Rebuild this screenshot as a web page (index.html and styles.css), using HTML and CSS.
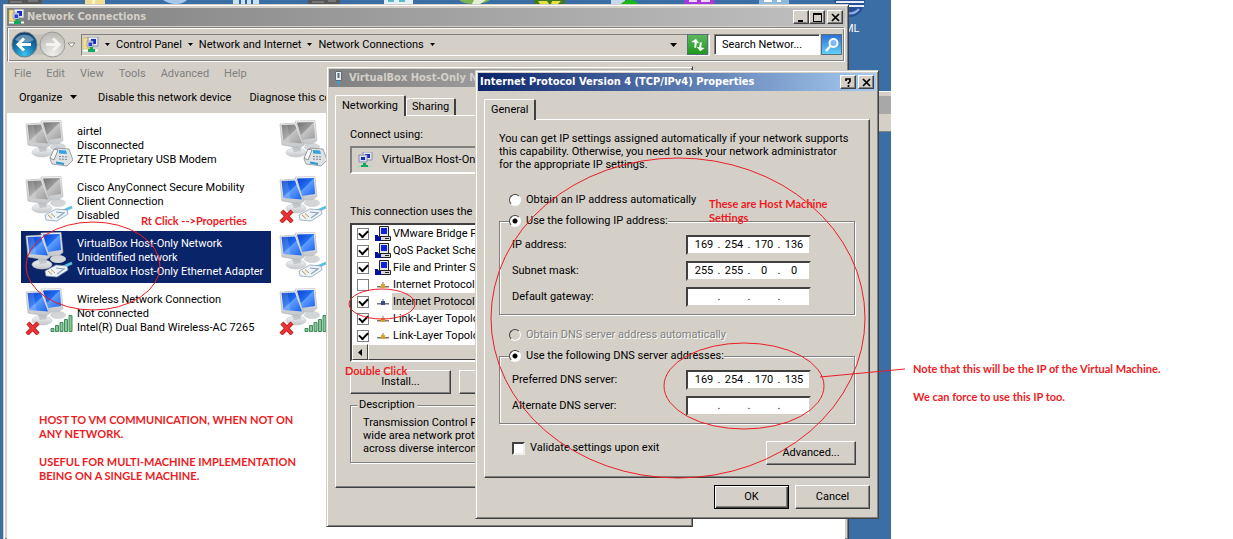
FILE: index.html
```html
<!DOCTYPE html>
<html lang="en">
<head>
<meta charset="utf-8">
<title>Network Connections</title>
<link rel="stylesheet" href="styles.css">
</head>
<body>
<svg class="defs" aria-hidden="true">
  <defs>
    <linearGradient id="scr-blue" x1="0" y1="0" x2="1" y2="1"><stop offset="0" stop-color="#0a3fc8"/><stop offset=".45" stop-color="#1f6cf2"/><stop offset=".5" stop-color="#5c9dff"/><stop offset="1" stop-color="#1a62ea"/></linearGradient>
    <linearGradient id="scr-gray" x1="0" y1="0" x2="1" y2="1"><stop offset="0" stop-color="#6e6e6e"/><stop offset=".45" stop-color="#9a9a9a"/><stop offset=".5" stop-color="#c4c4c4"/><stop offset="1" stop-color="#9c9c9c"/></linearGradient>
    <linearGradient id="silver" x1="0" y1="0" x2="0" y2="1"><stop offset="0" stop-color="#f2f3f4"/><stop offset="1" stop-color="#c3c6c9"/></linearGradient>
    <radialGradient id="nav-blue" cx=".5" cy=".9" r=".9"><stop offset="0" stop-color="#3fc4f0"/><stop offset=".5" stop-color="#1673ac"/><stop offset="1" stop-color="#0d3d6a"/></radialGradient>
    <radialGradient id="nav-gray" cx=".5" cy=".9" r=".9"><stop offset="0" stop-color="#efeeea"/><stop offset="1" stop-color="#b9b8b4"/></radialGradient>
  </defs>
  <symbol id="pcs" viewBox="0 0 48 48">
    <ellipse cx="33" cy="28" rx="8" ry="4" fill="#d3d6d8"/>
    <path d="M16 2l20-.5 2 20-4 3-12 1z" fill="url(#silver)" stroke="#b9bcbf" stroke-width=".6"/>
    <path class="screen" d="M18 3.500l17-.5 1 16-13 2z"/>
    <ellipse cx="17" cy="33.500" rx="10" ry="4.500" fill="url(#silver)" stroke="#c4c7ca" stroke-width=".6"/>
    <path d="M12 26l8-1 2 7-7 1z" fill="#c3c6c9"/>
    <path d="M1 5l16-1 8 22-4 3-18-3z" fill="url(#silver)" stroke="#b0b3b6" stroke-width=".6"/>
    <path class="screen" d="M2.500 6l13.500-.5 7 19-18.500-1.500z"/>
    <path d="M2.500 6l6-.3 3 17.700-7-.4z" fill="#fff" opacity=".15"/>
  </symbol>
  <symbol id="plug" viewBox="0 0 48 48">
    <path d="M38 36l9-4" stroke="#5bbfe4" stroke-width="3"/>
    <path d="M20 40l11-6 11 1 1 4-11 7-11-1z" fill="#edf3f9" stroke="#8396ab" stroke-width=".7"/>
    <path d="M23 40l4 3.500M26 38.500l4 3.500" stroke="#b49a48" stroke-width="1"/>
    <path d="M31 37l8 1-7 5" stroke="#8fa3ba" fill="none" stroke-width="1.200"/>
  </symbol>
  <symbol id="fax" viewBox="0 0 48 48">
    <path d="M25 40l6-11 13 1 4 11-6 6-15-2z" fill="#e0e3e6" stroke="#7b8288" stroke-width=".7"/>
    <path d="M34 31l7 .5 1 3.500-8-.5z" fill="#36a3dd"/>
    <path d="M34 37.500l8 .5M34 40l8 .5" stroke="#7c8690" stroke-dasharray="2 1"/>
    <path d="M31 43.500l8 1.500" stroke="#2d96cf" stroke-width="2" fill="none"/>
    <path d="M29 30l-4 9 4 2 4-10z" fill="#fafafa" stroke="#62686e" stroke-width=".7"/>
  </symbol>
  <symbol id="cross" viewBox="0 0 48 48">
    <path d="M3 36l10 11M13 36L2 47" stroke="#a31a1a" stroke-width="4.200"/>
    <path d="M3 36l10 11M13 36L2 47" stroke="#ee3135" stroke-width="2.800"/>
  </symbol>
  <symbol id="bars" viewBox="0 0 48 48">
    <path d="M26 41.500h3v3h-3zM30.500 38.500h3v6h-3zM35 35.500h3v9h-3zM39.500 32.500h3v12h-3zM44 28.500h3v16h-3z" fill="#86c79a" stroke="#358250" stroke-width=".9"/>
  </symbol>
  <symbol id="netfolder" viewBox="0 0 16 16">
    <path d="M0 1h5l1 1v10H0z" fill="#f4e08a" stroke="#c9ad4e" stroke-width=".6"/>
    <path d="M5 0h10v9H5z" fill="#e8ebf2" stroke="#77809a" stroke-width=".8"/>
    <path d="M8 2h5v5H8z" fill="#1a2fc0"/>
    <path d="M4 4h6v6H4z" fill="#d6dbee" stroke="#77809a" stroke-width=".6"/>
    <path d="M5.500 5.500h3.500v3.500H5.500z" fill="#2b3fd0"/>
    <path d="M0 13.500h15" stroke="#fff" stroke-width="2"/>
    <path d="M7 10h3v2h2v3H5v-3h2z" fill="#13a85c"/>
  </symbol>
  <symbol id="adapter" viewBox="0 0 16 16">
    <path d="M6 0h9v8H6z" fill="#e4e7ef" stroke="#77809a" stroke-width=".8"/>
    <path d="M8 2h5v4H8z" fill="#1a2fc0"/>
    <path d="M2 3h8v7H2z" fill="#d8dcec" stroke="#77809a" stroke-width=".8"/>
    <path d="M4 5h4v3H4z" fill="#1a2fc0"/>
    <path d="M0 14.500h15" stroke="#9adbb9" stroke-width="1"/>
    <path d="M6 11h3v2h2v2H4v-2h2z" fill="#13a85c"/>
  </symbol>
  <symbol id="service" viewBox="0 0 16 16">
    <path d="M4.500.500h9v10h-9z" fill="#e6e6e6" stroke="#222"/>
    <path d="M6 2h6v6H6z" fill="#1020e0"/>
    <path d="M3.500 10.500h12v4h-12z" fill="#d8d8d8" stroke="#222"/>
    <path d="M10 12.500h4" stroke="#222"/>
    <path d="M0 9h3v2h3v4H0z" fill="#0010a0"/>
  </symbol>
  <symbol id="protocol" viewBox="0 0 16 16">
    <path d="M2 9.500h12M8 5v3" stroke="#777" stroke-width="1"/>
    <path d="M2 10.500h12" stroke="#bbb"/>
    <path class="node" d="M6 7h4v4H6z"/>
  </symbol>
  <symbol id="down" viewBox="0 0 7 4"><path d="M0 0h7L3.500 4z"/></symbol>
</svg>

<div class="page">
  <div class="desktop">
    <svg class="desk-icons" viewBox="0 0 891 36" aria-hidden="true">
      <path d="M8 0h34v4H8z" fill="#555"/><path d="M10 2h12M28 1h10" stroke="#999"/>
      <path d="M85 0h20v4H85z" fill="#f0dc92"/><path d="M92 0h3v4h-3z" fill="#fff6c8"/>
      <path d="M163 0h24q-4 4-11 4t-13-4z" fill="#a9c8ee"/>
      <path d="M233 0h26v4h-26z" fill="#c9e0f4"/><path d="M240 0v4M246 0v4M252 0v4" stroke="#2c62a0" stroke-width="2"/>
      <path d="M308 0h32v4h-32z" fill="#555"/><path d="M312 2h12M328 1h8" stroke="#999"/>
      <path d="M384 0h29v4h-29z" fill="#e6f1f5"/><path d="M388 1h6M399 1h6" stroke="#5bb8cc" stroke-width="2"/>
      <path d="M459 0h31q-5 4-16 4t-15-4z" fill="#7db550"/><path d="M474 0h12l-6 4h-8z" fill="#e6efd8"/>
      <path d="M534 0h31v4h-31z" fill="#3f7a1e"/><path d="M538 1h9l2 3h-9zM552 1h9l-3 3h-7z" fill="#e4e042"/>
      <path d="M611 0h14v4h-14z" fill="#c6d8f0"/><path d="M621 4q3-4 9-4t8 4z" fill="#17b817"/>
      <path d="M684 0h31v4h-31z" fill="#a338dd"/><path d="M689 1h8M701 1h9" stroke="#f1d6ff" stroke-width="2"/>
      <path d="M759 0h30v4h-30z" fill="#8db9dc"/><path d="M764 1h8M777 1h4" stroke="#fff" stroke-width="2"/>
      <path d="M834 0h31q-2 17-16 17-8 0-12-9z" fill="#274f96"/><path d="M836 2h28M838 6h26" stroke="#e8eef8" stroke-width="2"/><path d="M846 13q8 2 13-4" stroke="#8fb0e4" stroke-width="2" fill="none"/>
    </svg>
    <span class="desk-label">ML</span>
    <div class="back-window"><div class="back-title"></div></div>

    <section class="window explorer">
      <header class="titlebar inactive">
        <svg class="ico16"><use href="#netfolder"/></svg>
        <h1>Network Connections</h1>
        <button class="cap" aria-label="Minimize"><svg viewBox="0 0 9 9"><path d="M1 7h5v2H1z"/></svg></button><button class="cap" aria-label="Maximize"><svg viewBox="0 0 9 9"><path d="M0 0h9v9H0zM1 2v6h7V2z" fill-rule="evenodd"/></svg></button>
        <button class="cap gap" aria-label="Close"><svg viewBox="0 0 9 9"><path d="M1 1l7 7M8 1L1 8" stroke="#000" stroke-width="1.700"/></svg></button>
      </header>
      <div class="address-band">
        <svg class="nav" viewBox="0 0 64 27" aria-hidden="true">
          <path d="M14 1Q27 6 41 1v25Q27 21 14 26z" fill="#c4c1ba"/>
          <circle cx="13.500" cy="13.500" r="12.500" fill="url(#nav-blue)" stroke="#74808c"/>
          <path d="M4 9a10.500 9 0 0 1 19 0q-9 5-19 0z" fill="#fff" opacity=".35"/>
          <path d="M20 13.500H8M13 7.500l-6 6 6 6" stroke="#fff" stroke-width="3" fill="none"/>
          <circle cx="41.500" cy="13.500" r="12.500" fill="url(#nav-gray)" stroke="#9b9a96"/>
          <path d="M35 13.500h12M42 7.500l6 6-6 6" stroke="#f4f3ef" stroke-width="3" fill="none"/>
          <path d="M57 12h7l-3.500 4z" fill="#fff" stroke="#777" stroke-width=".8"/>
        </svg>
        <nav class="address">
          <svg class="ico16"><use href="#netfolder"/></svg>
          <svg class="tri"><use href="#down"/></svg><a href="#cp">Control Panel</a>
          <svg class="tri"><use href="#down"/></svg><a href="#ni">Network and Internet</a>
          <svg class="tri"><use href="#down"/></svg><a href="#nc">Network Connections</a>
          <svg class="tri"><use href="#down"/></svg>
          <svg class="tri last"><use href="#down"/></svg>
        </nav>
        <button class="go green" aria-label="Refresh"><svg viewBox="0 0 16 16"><path d="M5 2l4 4H6.500v5h-2V6H1zM11 14L7 10h2.500V5h2v5H15z" fill="#fff" transform="rotate(8 8 8)"/></svg></button>
        <input class="search" type="text" aria-label="Search" value="Search Networ...">
        <button class="go blue" aria-label="Find"><svg viewBox="0 0 16 16"><circle cx="9.500" cy="6" r="4" fill="#7fb6f4" stroke="#fff" stroke-width="2"/><path d="M6.500 9L2 14" stroke="#fff" stroke-width="2.500"/></svg></button>
      </div>
      <nav class="menubar"><span>File</span><span>Edit</span><span>View</span><span>Tools</span><span>Advanced</span><span>Help</span></nav>
      <div class="toolbar"><button>Organize <svg class="tri big"><use href="#down"/></svg></button><button>Disable this network device</button><button>Diagnose this con</button></div>
      <div class="files">
        <ul class="conns">
          <li><svg class="ico48 gray"><use href="#pcs"/><use href="#fax"/></svg><p>airtel<br>Disconnected<br>ZTE Proprietary USB Modem</p></li>
          <li><svg class="ico48 gray"><use href="#pcs"/><use href="#fax"/></svg></li>
          <li><svg class="ico48 gray"><use href="#pcs"/><use href="#plug"/></svg><p>Cisco AnyConnect Secure Mobility<br>Client Connection<br>Disabled</p></li>
          <li><svg class="ico48"><use href="#pcs"/><use href="#plug"/><use href="#cross"/></svg></li>
          <li class="selected"><svg class="ico48"><use href="#pcs"/><use href="#plug"/></svg><p>VirtualBox Host-Only Network<br>Unidentified network<br>VirtualBox Host-Only Ethernet Adapter</p></li>
          <li><svg class="ico48"><use href="#pcs"/><use href="#plug"/></svg></li>
          <li><svg class="ico48"><use href="#pcs"/><use href="#bars"/><use href="#cross"/></svg><p>Wireless Network Connection<br>Not connected<br>Intel(R) Dual Band Wireless-AC 7265</p></li>
          <li><svg class="ico48"><use href="#pcs"/><use href="#bars"/><use href="#cross"/></svg></li>
        </ul>
      </div>
    </section>

    <section class="window adapter">
      <header class="titlebar inactive">
        <svg class="ico16" viewBox="0 0 16 16"><path d="M4.500 1.500h6v9h-6z" fill="#e8eef4" stroke="#5f6c78"/><path d="M7.500 3v5" stroke="#5f6c78" stroke-width="2"/><path d="M6 11h3v2H6zM7 13h1v3H7z" fill="#23a9e0"/></svg>
        <h2>VirtualBox Host-Only N</h2>
      </header>
      <div class="tabs"><button class="tab on">Networking</button><button class="tab">Sharing</button></div>
      <div class="panel">
        <p class="lead">Connect using:</p>
        <div class="device"><svg class="ico16"><use href="#adapter"/></svg>VirtualBox Host-Only</div>
        <p class="lead">This connection uses the f</p>
        <div class="list">
          <label><input type="checkbox" checked><svg class="ico16"><use href="#service"/></svg><span>VMware Bridge P</span></label>
          <label><input type="checkbox" checked><svg class="ico16"><use href="#service"/></svg><span>QoS Packet Sche</span></label>
          <label><input type="checkbox" checked><svg class="ico16"><use href="#service"/></svg><span>File and Printer Sh</span></label>
          <label><input type="checkbox"><svg class="ico16"><use href="#protocol"/></svg><span>Internet Protocol V</span></label>
          <label class="picked"><input type="checkbox" checked><svg class="ico16"><use href="#protocol"/></svg><span>Internet Protocol V</span></label>
          <label><input type="checkbox" checked><svg class="ico16"><use href="#protocol"/></svg><span>Link-Layer Topolo</span></label>
          <label><input type="checkbox" checked><svg class="ico16"><use href="#protocol"/></svg><span>Link-Layer Topolo</span></label>
          <div class="hscroll"><button aria-label="Scroll left"><svg viewBox="0 0 4 7"><path d="M4 0v7L0 3.500z"/></svg></button><span></span></div>
        </div>
        <div class="row-buttons"><button class="btn">Install...</button><button class="btn" aria-label="Uninstall"></button></div>
        <fieldset class="group about"><legend>Description</legend><p>Transmission Control Pro<br>wide area network proto<br>across diverse interconn</p></fieldset>
      </div>
    </section>

    <section class="window ipv4">
      <header class="titlebar active">
        <h2>Internet Protocol Version 4 (TCP/IPv4) Properties</h2>
        <button class="cap" aria-label="Help"><svg viewBox="0 0 9 9"><path d="M2 3V1h4v2.500L4.500 5v1M4.500 7v2" stroke="#000" stroke-width="1.700" fill="none"/></svg></button>
        <button class="cap gap" aria-label="Close"><svg viewBox="0 0 9 9"><path d="M1 1l7 7M8 1L1 8" stroke="#000" stroke-width="1.700"/></svg></button>
      </header>
      <div class="tabs"><button class="tab on">General</button></div>
      <form class="panel">
        <p class="intro">You can get IP settings assigned automatically if your network supports<br>this capability. Otherwise, you need to ask your network administrator<br>for the appropriate IP settings.</p>
        <label class="choice"><input type="radio" name="ip">Obtain an IP address automatically</label>
        <fieldset class="group">
          <legend><label class="choice"><input type="radio" name="ip" checked>Use the following IP address:</label></legend>
          <div class="field"><label for="a1">IP address:</label><div class="ip"><input id="a1" value="169">.<input aria-label="octet 2" value="254">.<input aria-label="octet 3" value="170">.<input aria-label="octet 4" value="136"></div></div>
          <div class="field"><label for="b1">Subnet mask:</label><div class="ip"><input id="b1" value="255">.<input aria-label="octet 2" value="255">.<input aria-label="octet 3" value="0">.<input aria-label="octet 4" value="0"></div></div>
          <div class="field"><label for="c1">Default gateway:</label><div class="ip"><input id="c1">.<input aria-label="octet 2">.<input aria-label="octet 3">.<input aria-label="octet 4"></div></div>
        </fieldset>
        <label class="choice off"><input type="radio" name="dns" disabled>Obtain DNS server address automatically</label>
        <fieldset class="group">
          <legend><label class="choice"><input type="radio" name="dns" checked>Use the following DNS server addresses:</label></legend>
          <div class="field"><label for="d1">Preferred DNS server:</label><div class="ip"><input id="d1" value="169">.<input aria-label="octet 2" value="254">.<input aria-label="octet 3" value="170">.<input aria-label="octet 4" value="135"></div></div>
          <div class="field"><label for="e1">Alternate DNS server:</label><div class="ip"><input id="e1">.<input aria-label="octet 2">.<input aria-label="octet 3">.<input aria-label="octet 4"></div></div>
        </fieldset>
        <div class="foot"><label class="check"><input type="checkbox">Validate settings upon exit</label><button type="button" class="btn">Advanced...</button></div>
      </form>
      <div class="actions"><button class="btn default">OK</button><button class="btn">Cancel</button></div>
    </section>
  </div>

  <aside class="notes"><p>Note that this will be the IP of the Virtual Machine.</p><p>We can force to use this IP too.</p></aside>

  <svg class="marks" aria-hidden="true">
    <ellipse cx="93" cy="266" rx="67" ry="44"/>
    <ellipse cx="382" cy="304" rx="33" ry="15"/>
    <ellipse cx="678" cy="318" rx="187" ry="160"/>
    <ellipse cx="744" cy="386" rx="80" ry="43"/>
    <path d="M820 377l85-8"/>
  </svg>
  <p class="note n-click">Rt Click --&gt;Properties</p>
  <p class="note n-double">Double Click</p>
  <p class="note n-host">These are Host Machine<br>Settings</p>
  <p class="note n-about">HOST TO VM COMMUNICATION, WHEN NOT ON<br>ANY NETWORK.<br><br>USEFUL FOR MULTI-MACHINE IMPLEMENTATION<br>BEING ON A SINGLE MACHINE.</p>
</div>
</body>
</html>
```
FILE: styles.css
```css
:root {
  --face: #d4d0c8;
  --shade: #808080;
  --dark: #404040;
  --ui: Roboto, "Noto Sans", sans-serif;
  --title: "DejaVu Sans Condensed", "Noto Sans", sans-serif;
  --pen: #ed1c24;
}
* { box-sizing: border-box; }
body { margin: 0; background: #fff; color: #000; font: 11px/14px var(--ui); }
p, h1, h2, ul, fieldset { margin: 0; padding: 0; }
button, input { font: inherit; color: inherit; margin: 0; padding: 0; border: 0; background: none; border-radius: 0; }
a { color: inherit; text-decoration: none; }
.defs { position: absolute; width: 0; height: 0; }

.page { position: relative; display: grid; grid-template-columns: 891fr 342fr; min-height: 100vh; overflow: hidden; }
.desktop { position: relative; background: #3a6ea5; overflow: hidden; }
.desk-icons { position: absolute; left: 0; top: 0; width: 891px; height: 36px; }
.desk-label { position: absolute; left: 844px; top: 22px; color: #fff; }
.back-window { position: absolute; left: 860px; right: 0; top: 91px; height: 41px; padding: 4px 0; background: var(--face); border-top: 1px solid #fff; border-bottom: 1px solid var(--shade); }
.back-title { height: 18px; background: #a8a8a8; }

.window { position: absolute; display: flex; flex-direction: column; padding: 2px; background: var(--face); border: 1px solid; border-color: var(--face) var(--dark) var(--dark) var(--face); box-shadow: inset 1px 1px #fff, inset -1px -1px var(--shade); }
.explorer { left: 3px; top: 4px; bottom: 0; width: 846px; padding: 3px 3px 0; border-bottom: 0; }
.adapter { left: 326px; top: 66px; width: 367px; height: 461px; }
.ipv4 { left: 475px; top: 70px; width: 404px; }

.titlebar { display: flex; align-items: center; height: 18px; padding: 0 2px; color: #fff; flex: none; }
.titlebar h1, .titlebar h2 { flex: 1; font: bold 11px/18px var(--title); white-space: nowrap; overflow: hidden; }
.inactive { background: linear-gradient(90deg, #808080, #c0c0c0); color: var(--face); }
.inactive .ico16 { margin-right: 2px; }
.active { background: linear-gradient(90deg, #0a246a, #a6caf0); }
.cap { display: flex; align-items: center; justify-content: center; width: 16px; height: 14px; background: var(--face); border: 1px solid; border-color: #fff var(--dark) var(--dark) #fff; box-shadow: inset -1px -1px var(--shade); }
.cap svg { width: 9px; height: 9px; }
.gap { margin-left: 2px; }
.ico16 { width: 16px; height: 16px; flex: none; }
.ico48 { width: 48px; height: 48px; flex: none; overflow: visible; --screen: url(#scr-blue); }
.ico48.gray { --screen: url(#scr-gray); }
.screen { fill: var(--screen); }
.node { fill: var(--node, #d9a520); }
.tri { width: 5px; height: 3px; flex: none; }
.tri.big { width: 7px; height: 4px; }

.address-band { display: flex; align-items: center; height: 35px; margin-top: 1px; padding: 0 2px 0 3px; border: 1px solid; border-color: var(--shade) #fff #fff var(--shade); box-shadow: inset 1px 1px #fff, inset -1px -1px var(--shade); }
.nav { width: 64px; height: 27px; margin-right: 6px; flex: none; }
.address { display: flex; align-items: center; gap: 6px; flex: 1; height: 22px; padding: 0 1px; border: 1px solid; border-color: var(--shade) #fff #fff var(--shade); }
.tri.last { width: 7px; height: 4px; margin-left: auto; margin-right: 31px; }
.go { width: 21px; height: 21px; display: flex; align-items: center; justify-content: center; border: 1px solid #5a6f7c; }
.go svg { width: 16px; height: 16px; }
.green { background: linear-gradient(#5cb85c, #1c9a1c); margin: 0 6px 0 -23px; }
.blue { background: linear-gradient(#2f6fd8, #5fd0f8); margin-left: 1px; }
.search { width: 106px; height: 21px; padding: 0 7px; background: #fff; border: 1px solid; border-color: var(--shade) #fff #fff var(--shade); box-shadow: inset 1px 1px var(--dark); }
.menubar { display: flex; gap: 15px; padding: 5px 7px 0; height: 21px; color: var(--shade); }
.toolbar { display: flex; align-items: center; gap: 18px; height: 30px; padding: 0 12px; flex: none; }
.toolbar button { white-space: nowrap; }
.toolbar .tri { margin: 0 3px 2px 5px; }
.files { flex: 1; background: #fff; padding: 6px 14px; overflow: hidden; }
.conns { list-style: none; display: grid; grid-template-columns: 250px 250px; gap: 4px; }
.conns li { display: flex; gap: 4px; height: 52px; padding: 0 4px; }
.conns p { padding-top: 6px; white-space: nowrap; }
.selected { background: #0a246a; color: #fff; }

.tabs { display: flex; align-items: flex-end; margin: 8px 6px 0; height: 20px; }
.tab { position: relative; height: 17px; padding: 0 5px; border: 1px solid; border-color: #fff var(--dark) transparent #fff; border-right-width: 2px; border-bottom: 0; border-radius: 2px 2px 0 0; }
.tab.on { height: 21px; margin-bottom: -1px; padding: 0 6px; background: var(--face); z-index: 1; }
.panel { margin: 0 6px; padding: 12px 13px 12px 14px; border: 1px solid; border-color: #fff var(--dark) var(--dark) #fff; box-shadow: inset -1px -1px var(--shade); }
.adapter .panel { height: 373px; overflow: hidden; padding-right: 8px; }
.lead { white-space: nowrap; }
.device { display: flex; align-items: center; gap: 9px; height: 28px; margin: 4px 0 31px; padding: 0 5px; border: 2px solid; border-color: var(--shade) #fff #fff var(--shade); white-space: nowrap; overflow: hidden; }
.list { margin-top: 4px; background: #fff; border: 2px solid; border-color: var(--dark) #fff #fff var(--dark); overflow: hidden; }
.list label { display: flex; align-items: center; height: 17px; padding-left: 5px; white-space: nowrap; }
.list .ico16 { margin: 0 1px 0 6px; }
.list label span { flex: 1; padding-left: 1px; line-height: 17px; }
.picked { --node: #3b4f86; }
.picked span { background: var(--face); }
.hscroll { display: flex; height: 16px; background: #eae8e4; }
.hscroll button, .hscroll span { width: 16px; background: var(--face); border: 1px solid; border-color: #fff var(--dark) var(--dark) #fff; }
.hscroll button svg { width: 4px; height: 7px; display: block; margin: auto; }
.hscroll span { width: 200px; }

input[type="checkbox"], input[type="radio"] { appearance: none; flex: none; }
input[type="checkbox"] { width: 12px; height: 12px; background: #fff; border: 1px solid var(--shade); }
input[type="checkbox"]:checked::before { content: ""; display: block; width: 7px; height: 4px; margin: 1px 0 0 1px; border: solid #000; border-width: 0 0 2px 2px; rotate: -45deg; }
.check input[type="checkbox"] { width: 13px; height: 13px; border: 2px solid; border-color: var(--dark) #eee #eee var(--dark); }
input[type="radio"] { width: 12px; height: 12px; border-radius: 50%; background: #fff; border: 1px solid; border-color: var(--dark) #fff #fff var(--dark); }
input[type="radio"]:checked { background: radial-gradient(circle, #000 2px, #fff 3px); }
input[type="radio"]:disabled { background: var(--face); }

.btn { height: 24px; min-width: 75px; background: var(--face); border: 1px solid; border-color: #fff var(--dark) var(--dark) #fff; box-shadow: inset -1px -1px var(--shade); }
.row-buttons { display: flex; gap: 8px; margin-top: 8px; }
.row-buttons .btn { flex: none; width: 101px; }
.default { border-color: #000; box-shadow: inset 1px 1px #fff, inset -1px -1px var(--dark), inset -2px -2px var(--shade); }
.group { min-width: 0; border: 1px solid var(--shade); box-shadow: 1px 1px #fff, inset 1px 1px #fff; }
.about { margin-top: 4px; padding: 4px 12px 7px; }
.about legend { padding: 0 2px; margin-left: -6px; background: var(--face); }
.about p { line-height: 13px; white-space: nowrap; }

.intro { line-height: 13px; margin-bottom: 22px; white-space: nowrap; }
.choice { display: flex; align-items: center; gap: 5px; height: 14px; padding-left: 10px; white-space: nowrap; }
.ipv4 .group { margin: 7px 1px 13px 0; padding: 7px 11px 7px 12px; }
.ipv4 legend { margin-left: -3px; padding: 0; background: var(--face); }
.ipv4 legend .choice { padding-left: 0; }
.off { color: var(--shade); text-shadow: 1px 1px #fff; }
.field { display: flex; align-items: center; justify-content: space-between; height: 20px; margin-bottom: 6px; padding-right: 32px; }
.field:last-child { margin-bottom: 0; }
.ip { display: grid; grid-template-columns: 24px 6px 24px 6px 24px 6px 24px; align-items: center; justify-items: center; width: 125px; height: 20px; padding: 0 4px; background: #fff; border: 2px solid; border-color: var(--dark) var(--face) var(--face) var(--dark); }
.ip input { width: 24px; height: 14px; text-align: center; }
.foot { display: flex; justify-content: space-between; align-items: flex-start; margin-top: 17px; }
.foot .btn { width: 90px; }
.check { display: flex; align-items: center; gap: 5px; padding-left: 13px; }
.actions { display: flex; justify-content: flex-end; gap: 6px; padding: 7px 6px; }

.notes { padding: 362px 0 0 22px; }
.notes p { margin-bottom: 14px; }
.notes, .note { color: var(--pen); font: bold 11px/14px Lato, sans-serif; white-space: nowrap; }
.marks { position: absolute; left: 0; top: 0; width: 100%; height: 100%; fill: none; stroke: var(--pen); pointer-events: none; }
.note { position: absolute; }
.n-click { left: 141px; top: 214px; }
.n-double { left: 345px; top: 364px; }
.n-host { left: 709px; top: 197px; }
.n-about { left: 39px; top: 413px; }
```
